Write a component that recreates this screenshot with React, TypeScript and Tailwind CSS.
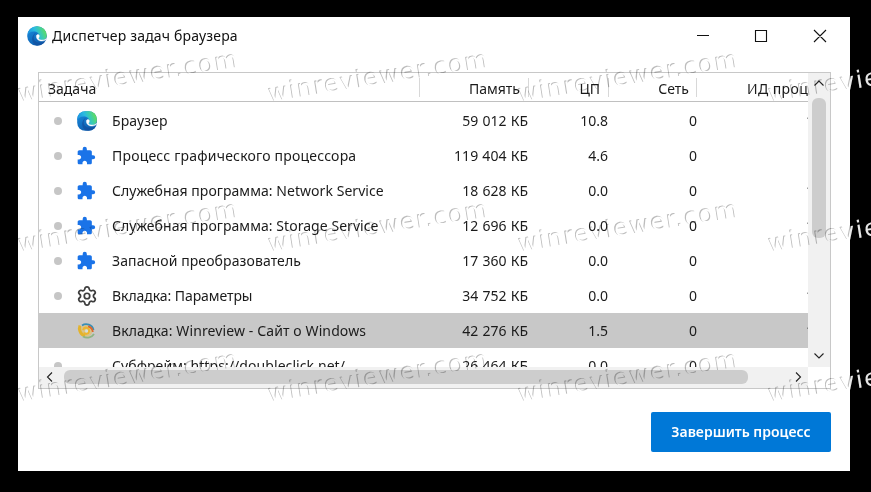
import { Settings } from 'lucide-react';
import { MdExtension } from 'react-icons/md';

type Kind = 'edge' | 'puzzle' | 'gear' | 'site' | 'none';

interface Task {
  icon: Kind;
  name: string;
  memory: string;
  cpu: string;
  pid: string;
  spacing: string;
  selected?: boolean;
}

const tasks: Task[] = [
  { icon: 'edge', name: 'Браузер', memory: '59 012', cpu: '10.8', pid: '12044', spacing: 'tracking-[0.1px]' },
  { icon: 'puzzle', name: 'Процесс графического процессора', memory: '119 404', cpu: '4.6', pid: '', spacing: 'tracking-[0.2px]' },
  { icon: 'puzzle', name: 'Служебная программа: Network Service', memory: '18 628', cpu: '0.0', pid: '11232', spacing: 'tracking-[0.05px]' },
  { icon: 'puzzle', name: 'Служебная программа: Storage Service', memory: '12 696', cpu: '0.0', pid: '10820', spacing: 'tracking-[0.05px]' },
  { icon: 'puzzle', name: 'Запасной преобразователь', memory: '17 360', cpu: '0.0', pid: '', spacing: 'tracking-[0.1px]' },
  { icon: 'gear', name: 'Вкладка: Параметры', memory: '34 752', cpu: '0.0', pid: '13108', spacing: 'tracking-[-0.07px]' },
  { icon: 'site', name: 'Вкладка: Winreview - Сайт о Windows', memory: '42 276', cpu: '1.5', pid: '12760', spacing: 'tracking-[0.11px]', selected: true },
  { icon: 'none', name: 'Субфрейм: https://doubleclick.net/', memory: '26 464', cpu: '0.0', pid: '', spacing: 'tracking-[0.07px]' },
];

function EdgeLogo({ id, round }: { id: string; round: number }) {
  return (
    <svg viewBox="0 0 20 20" className="size-5 shrink-0">
      <defs>
        <linearGradient id={`${id}-a`} x1="0" y1="0.6" x2="1" y2="0.3">
          <stop offset="0" stopColor="#1a8de0" />
          <stop offset="0.45" stopColor="#2bbbe0" />
          <stop offset="0.7" stopColor="#3fcfa4" />
          <stop offset="1" stopColor="#6be04a" />
        </linearGradient>
        <linearGradient id={`${id}-b`} x1="0" y1="0" x2="0.6" y2="1">
          <stop offset="0" stopColor="#1a8ee0" />
          <stop offset="1" stopColor="#0c5cae" />
        </linearGradient>
        <clipPath id={`${id}-c`}>
          <rect x="0.2" y="0.2" width="19.600" height="19.600" rx={round} />
        </clipPath>
      </defs>
      <g clipPath={`url(#${id}-c)`}>
        <path d="M0 0H20V20H0Z" fill={`url(#${id}-b)`} />
        <path d="M0 0H20V9C20 12.300 17.600 14 14.800 14C12.800 14 11.600 13.200 11.600 12.300C11.600 11.600 12.400 11.300 12.400 9.800C12.400 7.600 9.800 5.500 6.500 5.600C3.500 5.700 1 7.300 0 9.500Z" fill={`url(#${id}-a)`} />
        <path d="M6.700 12C6.500 9.700 7.500 7.700 9.300 6.700C7.500 7 5 10 5.200 13.500C5.500 17 8 20 11 20C14 20 17 18 18.500 15.500C12 18 7.200 16 6.700 12Z" fill="#124f9c" opacity="0.7" />
        <path d="M9.400 9.600C9 12.800 11.600 15.200 15 15.100C17 15 18.800 14.200 20.500 12.700L20.500 11.500C18.500 13.800 16.500 14 14.800 14C12.800 14 11.600 13.200 11.600 12.300C11.600 11.600 12.400 11.300 12.400 9.900C12.300 8.300 10 8 9.400 9.600Z" fill="#fff" stroke="#fff" strokeWidth="0.4" />
      </g>
    </svg>
  );
}

function SiteLogo() {
  return (
    <svg viewBox="0 0 20 18" className="h-[18px] w-5 shrink-0" fill="none">
      <ellipse cx="9" cy="9" rx="6.500" ry="6" fill="#dfc276" opacity="0.75" />
      <path d="M5 3.500C9 .8 15.500 2.500 16.500 8" stroke="#388eb5" strokeWidth="1.800" />
      <path d="M11 4.500C14 5 15.500 7 15.800 10" stroke="#e0672c" strokeWidth="1.800" />
      <path d="M3 3.500C1.500 7 3 12.500 8 14" stroke="#e3b32d" strokeWidth="3" />
      <path d="M6 14.500C10 17 15 15.300 17 12" stroke="#8fb583" strokeWidth="1.800" />
      <path d="M6 8C7.500 4 12.500 5.500 12 9.500C11.500 12.500 7.800 12.500 7 10.500" stroke="#edb52e" strokeWidth="2" />
      <circle cx="9.600" cy="8.900" r="1.600" fill="#d6e0dc" />
    </svg>
  );
}

function TaskIcon({ kind }: { kind: Kind }) {
  if (kind === 'edge') return <EdgeLogo id="row" round={8} />;
  if (kind === 'puzzle') return <MdExtension className="-ml-px size-5 text-[#1a73e8]" />;
  if (kind === 'gear') return <Settings className="-ml-px size-[22px] text-[#3d3d3d]" strokeWidth={1.9} />;
  if (kind === 'site') return <SiteLogo />;
  return null;
}

function Chevron({ d }: { d: string }) {
  return (
    <svg viewBox="0 0 12 12" className="size-3" fill="none" stroke="#222" strokeWidth="1.1">
      <path d={d} />
    </svg>
  );
}

function Row({ task }: { task: Task }) {
  return (
    <div className={`flex h-[35px] shrink-0 items-center ${task.selected ? 'bg-[#c8c8c8]' : ''}`}>
      <div className="flex w-[38px] shrink-0 pl-[15px]">
        {!task.selected && <span className="size-2 rounded-full bg-[#c6c6c6]" />}
      </div>
      <div className="flex w-[35px] shrink-0 items-center">
        <TaskIcon kind={task.icon} />
      </div>
      <div className={`w-[306px] shrink-0 ${task.spacing}`}>{task.name}</div>
      <div className="w-[110px] shrink-0 text-right [word-spacing:0.6px]">{task.memory} КБ</div>
      <div className="w-[80px] shrink-0 text-right">{task.cpu}</div>
      <div className="w-[89px] shrink-0 text-right">0</div>
      <div className="w-[150px] shrink-0 pl-[109px]">{task.pid}</div>
    </div>
  );
}

const rows = [0, 1, 2];
const marks = rows.flatMap((row) => [0, 1, 2, 3].map((col) => ({ x: 21 + col * 250, y: 80 + row * 150 })));

function Mark({ x, y, tone }: { x: number; y: number; tone: string }) {
  return (
    <span
      className={`absolute origin-bottom-left -rotate-[9deg] font-['DejaVu_Sans',sans-serif] text-[24px] leading-7 tracking-[1.4px] whitespace-nowrap ${tone}`}
      style={{ left: x, top: y }}
    >
      winreviewer.com
    </span>
  );
}

export default function App() {
  return (
    <div className="relative flex h-[492px] w-[871px] overflow-hidden bg-black pt-[17px] pl-[18px] font-['Noto_Sans','Open_Sans',sans-serif] text-[14px] text-[#1b1b1b]">
      <div className="flex h-[454px] w-[832px] flex-col bg-white">
        <header className="flex h-[37px] items-center justify-between pl-[9px]">
          <div className="flex items-center gap-[5px] text-[#111]">
            <EdgeLogo id="title" round={9.8} />
            <h1 className="tracking-[0.17px]">Диспетчер задач браузера</h1>
          </div>
          <svg viewBox="0 0 140 14" className="mr-4 h-[14px] w-[140px]" fill="none" stroke="#111" strokeWidth="1.100">
            <path d="M3 6.500H15M61.500 1.500H72.500V12.500H61.500ZM120 1L132 13M132 1L120 13" />
          </svg>
        </header>

        <section className="mt-[18px] ml-[20px] flex h-[317px] w-[793px] flex-col border border-[#c8c8c8]">
          <div className="flex h-[294px] overflow-hidden">
            <div className="flex w-[769px] flex-col overflow-hidden">
              <div className="flex h-[29px] shrink-0 items-center border-b border-[#c0c0c0] whitespace-nowrap">
                <div className="flex h-[19px] w-[381px] shrink-0 items-center border-r border-[#d8d8d8] pt-[2px] pl-[9px]">Задача</div>
                <div className="flex h-[19px] w-[109px] shrink-0 items-center justify-end border-r border-[#d8d8d8] pt-[2px] pr-2">Память</div>
                <div className="flex h-[19px] w-[80px] shrink-0 items-center justify-end border-r border-[#d8d8d8] pt-[2px] pr-2">ЦП</div>
                <div className="flex h-[19px] w-[88px] shrink-0 items-center justify-end border-r border-[#d8d8d8] pt-[2px] pr-[7px]">Сеть</div>
                <div className="shrink-0 pt-[2px] pl-[50px] tracking-[0.4px]">ИД процесса</div>
              </div>
              <div className="flex flex-1 flex-col overflow-hidden pt-px whitespace-nowrap">
                {tasks.map((task) => (
                  <Row key={task.name} task={task} />
                ))}
              </div>
            </div>
            <div className="flex w-[22px] shrink-0 flex-col items-center bg-[#f1f1f1] pt-1 pb-[5px]">
              <Chevron d="M1.500 8.500L6 4L10.500 8.500" />
              <div className="mt-[9px] h-[140px] w-[14px] rounded-[6px] bg-[#cdcdcd]" />
              <div className="flex-1" />
              <Chevron d="M1.500 3.500L6 8L10.500 3.500" />
            </div>
          </div>
          <div className="flex h-[21px] w-[769px] items-center bg-[#f1f1f1] pb-[2px] pl-[5px]">
            <Chevron d="M8 1.500L3.500 6L8 10.500" />
            <div className="ml-2 h-[14px] w-[684px] rounded-[6px] bg-[#cdcdcd]" />
            <div className="flex-1" />
            <div className="mr-[4px] flex">
              <Chevron d="M4 1.500L8.500 6L4 10.500" />
            </div>
          </div>
        </section>

        <footer className="mt-[23px] flex justify-end pr-[19px]">
          <button className="h-10 w-[180px] rounded-[2px] bg-[#0078d7] pb-[2px] font-semibold text-white">Завершить процесс</button>
        </footer>
      </div>

      {/* Embossed watermark: only the shadow edge darkens the light window */}
      <div className="pointer-events-none absolute inset-0 overflow-hidden mix-blend-multiply" aria-hidden="true">
        {marks.map((mark) => (
          <Mark key={`${mark.x}-${mark.y}`} x={mark.x} y={mark.y} tone="text-white [text-shadow:-1px_-1px_0_#bdbdbd]" />
        ))}
      </div>
      {/* Bright part of the watermark over the black desktop edge */}
      <div className="pointer-events-none absolute top-0 right-0 h-full w-[21px] overflow-hidden" aria-hidden="true">
        {rows.map((row) => (
          <Mark key={row} x={-79} y={80 + row * 150} tone="text-white/90" />
        ))}
      </div>
    </div>
  );
}
